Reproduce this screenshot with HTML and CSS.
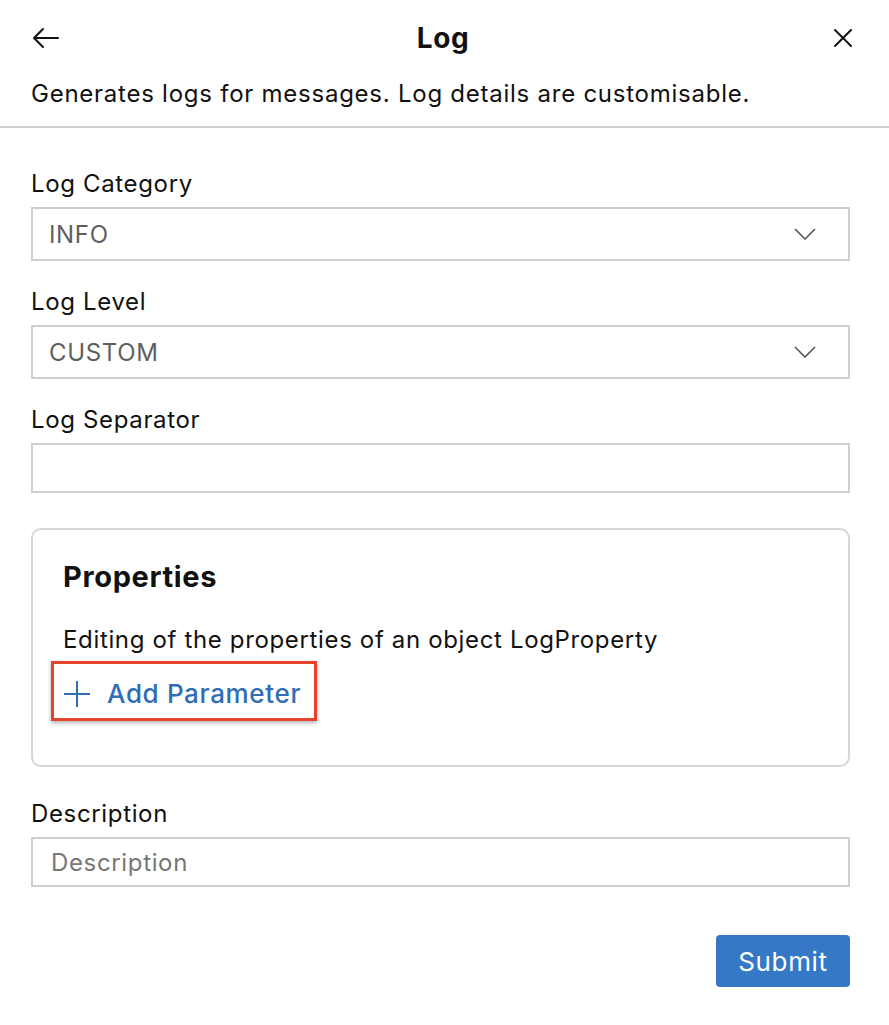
FILE: index.html
```html
<!DOCTYPE html>
<html>
<head>
<meta charset="utf-8">
<link rel="stylesheet" href="styles.css">
</head>
<body>
<div class="panel">
  <header class="head">
    <div class="title-row">
      <button class="icon-btn back" aria-label="Back">
        <svg width="27" height="22" viewBox="0 0 27 22"><path d="M26 11H2M11 2L2 11l9 9" fill="none" stroke="#111" stroke-width="2" stroke-linecap="round" stroke-linejoin="round"/></svg>
      </button>
      <h1 class="title">Log</h1>
      <button class="icon-btn close" aria-label="Close">
        <svg width="20" height="20" viewBox="0 0 20 20"><path d="M2 2l16 16M18 2L2 18" fill="none" stroke="#111" stroke-width="2" stroke-linecap="round"/></svg>
      </button>
    </div>
    <p class="desc">Generates logs for messages. Log details are customisable.</p>
  </header>
  <form class="form">
    <div class="field">
      <label class="label">Log Category</label>
      <div class="select"><span class="val">INFO</span>
        <svg class="chev" width="22" height="12" viewBox="0 0 22 12"><path d="M1 1l10 10L21 1" fill="none" stroke="#555" stroke-width="1.6"/></svg>
      </div>
    </div>
    <div class="field">
      <label class="label">Log Level</label>
      <div class="select"><span class="val">CUSTOM</span>
        <svg class="chev" width="22" height="12" viewBox="0 0 22 12"><path d="M1 1l10 10L21 1" fill="none" stroke="#555" stroke-width="1.6"/></svg>
      </div>
    </div>
    <div class="field">
      <label class="label">Log Separator</label>
      <div class="input"></div>
    </div>
    <section class="card">
      <h2 class="card-title">Properties</h2>
      <p class="card-text">Editing of the properties of an object LogProperty</p>
      <div class="highlight">
        <span class="add">
          <svg width="28" height="28" viewBox="0 0 28 28"><path d="M14 1v26M1 14h26" fill="none" stroke="#2f6db5" stroke-width="2"/></svg>
          <span>Add Parameter</span>
        </span>
      </div>
    </section>
    <div class="field desc-field">
      <label class="label">Description</label>
      <div class="input"><span class="ph">Description</span></div>
    </div>
    <div class="actions">
      <button type="button" class="submit">Submit</button>
    </div>
  </form>
</div>
</body>
</html>
```

FILE: styles.css
```css
* { box-sizing: border-box; }
html, body { margin: 0; padding: 0; background: #fff; }
body { font-family: Inter, "Noto Sans", sans-serif; color: #111; letter-spacing: 0.65px; }
.panel { width: 889px; }
.head { border-bottom: 2px solid #cfcfcf; padding: 18px 31px 18px 31px; }
.title-row { display: flex; align-items: center; justify-content: space-between; height: 40px; }
.icon-btn { background: none; border: 0; padding: 0; display: flex; align-items: center; cursor: pointer; }
.back { margin-left: 1px; }
.close { margin-right: 5px; }
.title { margin: 0 0 0 -6px; font-size: 28px; font-weight: 700; line-height: 40px; }
.desc { margin: 22px 0 0 0; font-size: 24px; line-height: 28px; letter-spacing: 0.75px; }
.form { padding: 42px 39px 0 31px; display: flex; flex-direction: column; }
.field { display: flex; flex-direction: column; gap: 9px; margin-bottom: 27px; }
.label { font-size: 24px; line-height: 28px; }
.select, .input { border: 2px solid #cfcfcf; height: 54px; display: flex; align-items: center; padding: 0 32px 0 16px; justify-content: space-between; }
.input { height: 50px; padding-left: 18px; }
.val { font-size: 24px; color: #5f5f5f; }
.ph { font-size: 24px; color: #777; }
.card { border: 2px solid #d6d6d6; border-radius: 10px; padding: 31px 30px 44px 30px; margin-top: 8px; margin-bottom: 33px; }
.card-title { margin: 0; font-size: 29px; font-weight: 700; line-height: 32px; }
.card-text { margin: 33px 0 0 0; font-size: 24px; line-height: 28px; }
.highlight { display: inline-flex; margin: 7px 0 0 -12px; border: 3px solid #e5432b; padding: 15px 13px 9px 9px; box-shadow: 0 2px 4px rgba(0,0,0,0.3); }
.add { display: inline-flex; align-items: center; gap: 16px; color: #2f6db5; font-size: 26px; line-height: 30px; font-weight: 500; }
.desc-field { margin-bottom: 48px; }
.actions { display: flex; justify-content: flex-end; }
.submit { background: #3578c6; color: #fff; border: 0; border-radius: 4px; font-family: inherit; font-size: 26px; letter-spacing: 0.65px; width: 134px; height: 52px; }
```
